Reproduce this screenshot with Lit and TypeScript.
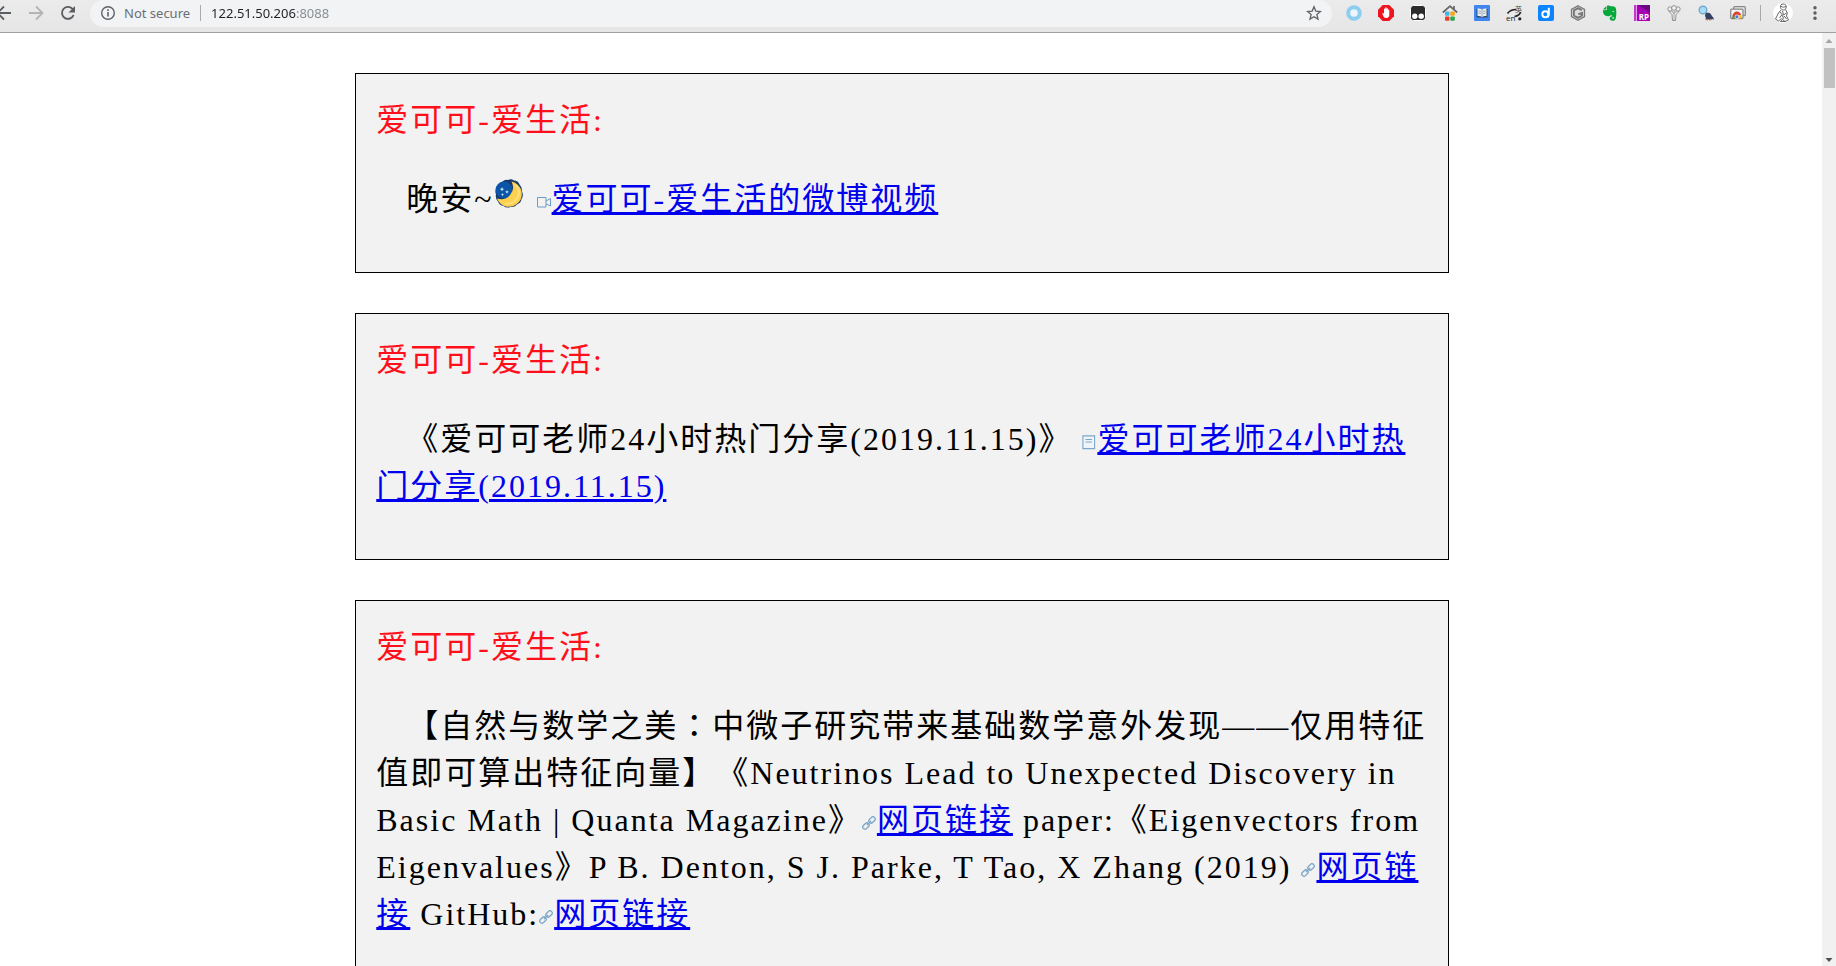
import { LitElement, html, css, svg } from "lit";
import { customElement, property } from "lit/decorators.js";

const icon = (body: unknown, size = 16) => html`<svg
  class="icon"
  width=${size}
  height=${size}
  viewBox="0 0 ${size} ${size}"
  aria-hidden="true"
>${body}</svg>`;

const navIcons = {
  back: icon(svg`<path d="M15 8H2M8 1.5 1.5 8 8 14.5" fill="none" stroke="#5a5d61" stroke-width="1.8"/>`),
  forward: icon(svg`<path d="M1 8h13M8 1.5 14.500 8 8 14.500" fill="none" stroke="#b4b4b4" stroke-width="1.8"/>`),
  reload: icon(svg`<path d="M13.600 10A6 6 0 1 1 12.300 3.700L14 5.500" fill="none" stroke="#5a5d61" stroke-width="1.900"/><path d="M15 1v6.500H8.500z" fill="#5a5d61"/>`),
  info: icon(svg`<circle cx="8" cy="8" r="6.300" fill="none" stroke="#5f6368" stroke-width="1.400"/><path d="M8 7v4.600M8 4.200v1.700" stroke="#5f6368" stroke-width="1.600"/>`),
  star: icon(svg`<path d="m8 1.800 1.800 4.300 4.700.4-3.600 3 1.100 4.600L8 11.700l-4 2.400 1.100-4.600-3.600-3 4.700-.4z" fill="none" stroke="#5f6368" stroke-width="1.300"/>`),
  menu: icon(svg`<g fill="#5a5d61"><circle cx="8" cy="2.700" r="1.700"/><circle cx="8" cy="8" r="1.700"/><circle cx="8" cy="13.300" r="1.700"/></g>`),
  avatar: icon(
    svg`<circle cx="10" cy="10" r="10" fill="#fff"/>
      <g fill="none" stroke="#555" stroke-width=".9">
        <path d="M7.500 4.500c-.5-2.500 1-3.500 2.700-3.500s3.300 1 3 3.300c-.2 1.600-1.200 2.700-2.700 2.700s-2.700-.9-3-2.500zM8 3.500c1.500.8 3.500.8 5 0"/>
        <path d="m8 7-2.500 3-3 6 3 2 3-2.500M12.500 6.500l1.800 3.500-.8 3 2 4-3.500 1.500-2.500-2M7 9l2 2.500-2.500 3.500M9.500 8l1 4 3-2M9 12l1.500 3-3 3.500h5M11 13l2.500 3"/>
      </g>`,
    20
  ),
};

const extensions = [
  { name: "Ring", art: icon(svg`<circle cx="8" cy="8" r="5.800" fill="#eef4f8" stroke="#8dcdef" stroke-width="4"/>`) },
  {
    name: "Ad blocker",
    art: icon(svg`<path d="M4.700 0h6.600L16 4.700v6.600L11.300 16H4.700L0 11.300V4.700z" fill="#f0141e"/><path d="M4.200 8.500 5.400 8l.6 1V4.100c0-.9 1.200-.9 1.300 0V3c.1-.9 1.300-.9 1.400 0v1c.1-.9 1.300-.9 1.300 0v1.200c.1-.8 1.300-.8 1.300 0V10c0 2-1.100 3-3.100 3-2.200 0-2.800-1.500-4-4.500z" fill="#fff"/>`),
  },
  {
    name: "Script manager",
    art: icon(svg`<rect x=".5" y=".5" width="15" height="15" rx="3" fill="#2b2b2b" stroke="#fff"/><circle cx="4.800" cy="11.300" r="2.700" fill="#fff"/><circle cx="11.200" cy="11.300" r="2.700" fill="#fff"/>`),
  },
  {
    name: "Home",
    art: icon(svg`<path d="M.8 7.500 8 1.200l7.200 6.300M12 1v3" fill="none" stroke="#666" stroke-width="1.700"/><rect x="3" y="6.500" width="4.500" height="4.200" rx="1" fill="#40b4e8"/><rect x="8.300" y="6.500" width="4.500" height="4.200" rx="1" fill="#f8a51b"/><rect x="3" y="11.400" width="4.500" height="4.400" rx="1" fill="#ea3a2d"/><rect x="8.300" y="11.400" width="4.500" height="4.400" rx="1" fill="#2ca84c"/>`),
  },
  {
    name: "Reader",
    art: icon(svg`<rect width="16" height="16" rx="1" fill="#3f86f0"/><path d="M2.500 4h11v8.500h-11z" fill="#2d4a70"/><path d="M3.500 3.500Q6 3 8 4.500 10 3 12.500 3.500V11Q10 10.500 8 12 6 10.500 3.500 11z" fill="#e9edf0"/><path d="M8 4.500V12M4.500 6l2.500.4M4.500 8l2.500.4M11.500 6 9 6.400M11.500 8 9 8.400" stroke="#8a99a8" stroke-width=".8"/>`),
  },
  {
    name: "Translate",
    art: icon(svg`<text x="0" y="15.500" font-family="Open Sans, sans-serif" font-size="8" fill="#222">en</text><text x="9" y="6.500" font-family="Noto Sans CJK SC, sans-serif" font-size="7" fill="#444">英</text><path d="M1.500 8.500C4 5 6.500 4.500 10 4.500M14.500 7c-.5 2.500-3 4-6 4.500" fill="none" stroke="#222" stroke-width="1.500"/><circle cx="13.800" cy="13.800" r="1.600" fill="#222"/>`),
  },
  {
    name: "Docs",
    art: icon(svg`<rect width="16" height="16" rx="2" fill="#0a84ff"/><circle cx="7.300" cy="9.300" r="3" fill="none" stroke="#fff" stroke-width="2"/><path d="M10.800 2.800v6.500q0 2-1.300 3" fill="none" stroke="#fff" stroke-width="2"/>`),
  },
  {
    name: "Hexagon",
    art: icon(svg`<path d="m8 .8 6.500 3.600v7.200L8 15.200l-6.500-3.600V4.400z" fill="#ddd" stroke="#777" stroke-width="1.300"/><path d="M11.800 5.200 8 3.100 3.900 5.500v5L8 12.900l4-2.400V8L8.300 9.200" fill="none" stroke="#777" stroke-width="1.900"/>`),
  },
  {
    name: "Notes",
    art: icon(svg`<path d="M5 .8c1.300-.6 3-.5 3.600.4 2.400 0 4.800.4 5.200 1.700.8 3 .7 7.600-.1 10.600-.4 1.700-1.400 2.300-3 2.300-2.400 0-3-1.100-3-2.500 0-1.500 1.100-2.200 2.700-2.100-.7-.3-1.200-.8-1.300-1.600C8.500 11 7.500 11.500 5.800 11.200 2.800 10.800 1 9.500.9 5.200L5 5z" fill="#06a83c"/><path d="M1 4.400 4.300 1v3.400z" fill="#06a83c"/><path d="M10.200 7c.4-1.300 1.900-1.200 2.200.2-.8-.3-1.400-.3-2.200-.2zM12 12.500c-1.500-.5-2 .1-2 1h2z" fill="#e8e8e8"/>`),
  },
  {
    name: "RP",
    art: icon(svg`<path d="M0 0h16v16H0z" fill="#a800b4"/><path d="M3 0h13v8L9 3z" fill="#6a0a80"/><path d="M0 0h2v16H0z" fill="#c33acb"/><path d="M2 0h.8v16H2z" fill="#f4c8f6"/><text x="4.800" y="14.500" font-family="Open Sans, sans-serif" font-weight="700" font-size="8" fill="#fff">RP</text>`),
  },
  {
    name: "Tree",
    art: icon(svg`<g fill="#f0f0f0" stroke="#888" stroke-width=".9"><path d="M6.500 15.500 6 9.500 3 6.500 5 5.500l3 3 3-3 2 1-3 3-.5 6z"/><circle cx="4" cy="4" r="2.200"/><circle cx="12" cy="4" r="2.200"/><circle cx="8" cy="3" r="2.400"/></g><path d="M8 6v9" stroke="#999" stroke-width=".8"/>`),
  },
  {
    name: "Search",
    art: icon(svg`<circle cx="5" cy="5" r="3.800" fill="#a7ddf8" stroke="#6fa9cf" stroke-width="1.400"/><path d="m8 8 3 2" stroke="#877" stroke-width="2"/><path d="M7 11c-.2-2.600 2-4 4.500-3 2 .8 1.700 2.900 3.800 4.500l.7 2-3-.6-1.500.9-2-.6-2.500.3 1-1.500z" fill="#34435f"/><path d="m11 15 3-.5M8 14.500l2 .7" stroke="#d07045"/>`),
  },
  {
    name: "Tabs",
    art: icon(svg`<rect x="3.700" y="1.700" width="11.600" height="9" rx="1" fill="#e8e8e8" stroke="#888" stroke-width="1.300"/><rect x=".7" y="4.200" width="12.300" height="9.300" rx="1" fill="#f5f5f5" stroke="#888" stroke-width="1.300"/><path d="M2.500 13.500V11a4.400 4.400 0 0 1 8.800 0v2.500z" fill="#dd4237"/><path d="M2.500 13.500V10l3.500 3.500z" fill="#26a65b"/><path d="M7.800 13.500 8.300 10h2.900v3.500z" fill="#fbc02d"/><circle cx="6.900" cy="11.800" r="1.900" fill="#3b78e7" stroke="#fff" stroke-width=".7"/>`),
  },
];

const linkMarks = {
  video: svg`<g fill="none" stroke="#6b9cc4" stroke-width="1"><path d="M.5 2.500h8.500v9.500H.5zM9 6l4.500-2.500v7.500L9 8.800"/></g>`,
  article: svg`<path d="M.9 .9h11.700v12.700H.9z" fill="#eef4f8" stroke="#7ba6c8" stroke-width="1.100"/><path d="M3.500 4.500h6.500M3.500 7h6.500" stroke="#7ba6c8" stroke-width="1.100"/>`,
  link: svg`<g fill="none" stroke="#7ba6c8" stroke-width="1.300" transform="rotate(-45 7 7)"><rect x="-.8" y="4.800" width="7" height="4.400" rx="2"/><rect x="7.800" y="4.800" width="7" height="4.400" rx="2"/><path d="M4 7h6"/></g>`,
};

const mark = (kind: keyof typeof linkMarks) =>
  html`<svg class="mark" viewBox="0 0 15 15" aria-hidden="true">${linkMarks[kind]}</svg>`;

const moon = html`<svg class="moon" viewBox="1 0 33 32" role="img" aria-label="晚安">
  <path d="M9 4q3-3 6-2 3-1.500 6 .5 4 0 5.500 4 3 3 2.500 7 2 4-.5 7.500-.5 4-4.500 5.500-2.500 3-6.500 2.500-4 1.500-7-1-4-.5-5.500-4.500-3-3-2-7-1.500-4 1-7 1-4 5-5.500z" fill="#163a6c"/>
  <circle cx="11" cy="12" r="8.500" fill="#0a55a8"/>
  <path d="M18.500 3.500A12.800 12.800 0 1 1 4 20.500 12 12 0 0 0 18.500 3.500z" fill="#fdd050"/>
  <path d="M21.500 6.500c4.500 3 6 9 2.500 14-3 4-7 6-12 5" fill="none" stroke="#ffe07a" stroke-width="2"/>
  <path d="m9 9 .7 1.800 1.800.2-1.800.8L9 13.500l-.7-1.700-1.800-.8 1.800-.2zM14 12l.6 1.400 1.400.4-1.400.6-.6 1.400-.6-1.400-1.400-.6 1.400-.4zM9.500 15l.5 1.200 1.300.4-1.300.5-.5 1.200-.5-1.200-1.300-.5 1.300-.4z" fill="#d9f1ff"/>
</svg>`;

@customElement("browser-toolbar")
class BrowserToolbar extends LitElement {
  static styles = css`
    :host {
      display: flex;
      align-items: flex-start;
      height: 32px;
      flex: none;
      padding-right: 5px;
      overflow: hidden;
      background: linear-gradient(#ebebeb, #e6e6e6);
      border-bottom: 1px solid #a0a0a0;
      font: 13px/26px "Noto Sans", "Open Sans", sans-serif;
    }
    .group {
      display: flex;
      align-items: center;
      height: 26px;
    }
    .nav {
      margin-left: -12px;
      margin-right: 6px;
    }
    .extensions {
      margin: 0 6px;
    }
    button {
      display: flex;
      align-items: center;
      justify-content: center;
      width: 32px;
      height: 26px;
      padding: 0;
      border: 0;
      background: none;
    }
    .icon {
      display: block;
      flex: none;
    }
    .omnibox {
      display: flex;
      align-items: center;
      flex: 1;
      min-width: 0;
      height: 27px;
      padding: 0 2px 1px 2px;
      box-sizing: border-box;
      border-radius: 14px;
      background: #f1f3f5;
    }
    .security {
      width: auto;
      gap: 8px;
      padding-left: 8px;
      color: #6b6f74;
      font: inherit;
    }
    .rule {
      width: 1px;
      height: 16px;
      background: #a8abae;
    }
    .omnibox .rule {
      margin: 0 10px;
    }
    input {
      flex: 1;
      min-width: 0;
      height: 26px;
      padding: 0;
      border: 0;
      outline: 0;
      font: inherit;
      color: transparent;
      background: linear-gradient(to right, #202124 86px, #85898e 86px);
      background-clip: text;
      -webkit-background-clip: text;
    }
    .end {
      margin-left: 6px;
    }
  `;

  render() {
    return html`
      <div class="group nav">
        <button aria-label="Back">${navIcons.back}</button>
        <button aria-label="Forward">${navIcons.forward}</button>
        <button aria-label="Reload">${navIcons.reload}</button>
      </div>
      <div class="omnibox">
        <button class="security">${navIcons.info}<span>Not secure</span></button>
        <span class="rule"></span>
        <input type="text" aria-label="Address" .value=${"122.51.50.206:8088"} />
        <button aria-label="Bookmark">${navIcons.star}</button>
      </div>
      <div class="group extensions">
        ${extensions.map((e) => html`<button aria-label=${e.name}>${e.art}</button>`)}
      </div>
      <div class="group">
        <span class="rule"></span>
        <button class="end" aria-label="Profile">${navIcons.avatar}</button>
        <button aria-label="Menu">${navIcons.menu}</button>
      </div>
    `;
  }
}

@customElement("weibo-post")
class WeiboPost extends LitElement {
  @property() author = "";

  static styles = css`
    :host {
      display: block;
      box-sizing: border-box;
      padding: 23px 20px 17px;
      border: 1px solid #000;
      background: #f2f2f2;
    }
    .author {
      margin: 0 0 32px;
      color: #ff0f19;
      font: inherit;
    }
    .body {
      margin: 0 0 32px;
      text-indent: 30px;
    }
  `;

  render() {
    return html`<h2 class="author">${this.author}:</h2>
      <div class="body"><slot></slot></div>`;
  }
}

@customElement("app-root")
class AppRoot extends LitElement {
  static styles = css`
    :host {
      display: flex;
      flex-direction: column;
      height: 100vh;
      overflow: hidden;
      background: #fff;
    }
    .viewport {
      display: flex;
      flex: 1;
      min-height: 0;
    }
    .feed {
      display: flex;
      flex-direction: column;
      gap: 40px;
      flex: 1;
      min-width: 0;
      box-sizing: border-box;
      padding: 40px 20.3% 40px 19.35%;
      overflow: hidden;
      font: 32px/47px "Liberation Serif", "Noto Sans CJK SC", serif;
      letter-spacing: 2px;
      text-spacing-trim: space-all;
      color: #000;
    }
    weibo-post {
      flex: none;
    }
    a {
      color: #0000ee;
      text-decoration: underline;
      text-decoration-thickness: 3px;
    }
    .mark {
      width: 15px;
      height: 15px;
    }
    .moon {
      width: 33px;
      height: 32px;
    }
    .centered {
      font-family: "Noto Sans CJK TC", sans-serif;
      line-height: 1;
    }
    .scrollbar {
      display: flex;
      flex-direction: column;
      align-items: center;
      width: 14px;
      flex: none;
      background: #f1f1f1;
    }
    .arrow {
      display: block;
      width: 14px;
      height: 15px;
    }
    .thumb {
      width: 11px;
      height: 40px;
      margin-bottom: auto;
      background: #c1c1c1;
    }
  `;

  render() {
    return html`
      <browser-toolbar></browser-toolbar>
      <div class="viewport">
        <main class="feed" lang="zh-CN">
          <weibo-post author="爱可可-爱生活">晚安~${moon} ${mark("video")}<a href="#">爱可可-爱生活的微博视频</a></weibo-post>
          <weibo-post author="爱可可-爱生活">《爱可可老师24小时热门分享(2019.11.15)》 ${mark("article")}<a href="#">爱可可老师24小时热门分享(2019.11.15)</a></weibo-post>
          <weibo-post author="爱可可-爱生活">【自然与数学之美<span class="centered" lang="zh-TW">：</span>中微子研究带来基础数学意外发现——仅用特征值即可算出特征向量】《Neutrinos Lead to Unexpected Discovery in Basic Math | Quanta Magazine》${mark("link")}<a href="#">网页链接</a> paper:《Eigenvectors from Eigenvalues》P B. Denton, S J. Parke, T Tao, X Zhang (2019) ${mark("link")}<a href="#">网页链接</a> GitHub:${mark("link")}<a href="#">网页链接</a></weibo-post>
        </main>
        <div class="scrollbar" aria-hidden="true">
          <svg class="arrow" viewBox="0 0 14 15"><path d="M3.500 10 7 6l3.500 4z" fill="#a3a3a3" /></svg>
          <div class="thumb"></div>
          <svg class="arrow" viewBox="0 0 14 15"><path d="M3.500 7 7 11l3.500-4z" fill="#505050" /></svg>
        </div>
      </div>
    `;
  }
}
